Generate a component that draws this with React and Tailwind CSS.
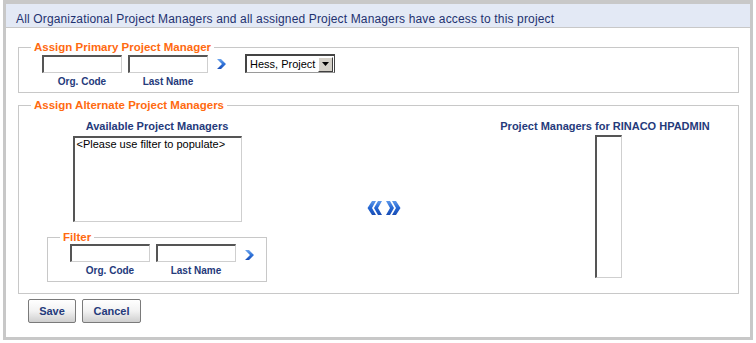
import React from "react";

const navy = "text-[#253a7b]";

function Chevron({ className = "" }) {
  return (
    <svg width="10" height="10" viewBox="0 0 10 10" className={className}>
      <defs>
        <linearGradient id="chev" x1="0" y1="0" x2="0" y2="1">
          <stop offset="0" stopColor="#6ea6ee" />
          <stop offset="0.5" stopColor="#2f72d8" />
          <stop offset="1" stopColor="#1a4fb8" />
        </linearGradient>
      </defs>
      <path d="M0 0 H4 L9 5 L4 10 H0 L5 5 Z" fill="url(#chev)" />
    </svg>
  );
}

function DoubleChevron({ left }) {
  return (
    <svg width="15" height="14" viewBox="0 0 15 14" style={left ? { transform: "scaleX(-1)" } : undefined}>
      <defs>
        <linearGradient id="dchev" x1="0" y1="0" x2="0" y2="1">
          <stop offset="0" stopColor="#5d98ea" />
          <stop offset="0.5" stopColor="#2466d2" />
          <stop offset="1" stopColor="#1a4db5" />
        </linearGradient>
      </defs>
      <path d="M0 0 H4 L8 7 L4 14 H0 L4 7 Z" fill="url(#dchev)" />
      <path d="M6 0 H10 L14.5 7 L10 14 H6 L10 7 Z" fill="url(#dchev)" />
    </svg>
  );
}

function Field({ label, className = "" }) {
  return (
    <div className={"flex flex-col items-center " + className}>
      <div className="w-[80px] h-[18px] bg-white border-t-2 border-l-2 border-r border-b border-t-[#555] border-l-[#555] border-r-[#cfcfcf] border-b-[#cfcfcf]" />
      <div className={"mt-[3px] text-[10px] leading-[12px] font-bold " + navy}>{label}</div>
    </div>
  );
}

function Legend({ children }) {
  return (
    <legend className="ml-[12px] px-[3px] text-[11.5px] leading-[14px] font-bold text-[#ff6a10]">
      {children}
    </legend>
  );
}

export default function App() {
  return (
    <div className="bg-white w-[756px] h-[343px]" style={{ fontFamily: '"Liberation Sans", Arial, sans-serif' }}>
      <div className="ml-[3px] w-[750px] h-[340px] border-[3px] border-t-[4px] border-[#c8c8c8] bg-white">
        <div className="h-[24px] bg-[#e3e9f5] border-b border-[#c8c8c8] pl-[10px] pt-[2px]">
          <span className="text-[12px] leading-[21px] tracking-[0.15px] text-[#1f3270]">
            All Organizational Project Managers and all assigned Project Managers have access to this project
          </span>
        </div>

        <div className="pl-[12px] pr-[11px]">
          <fieldset className="mt-[12px] border border-[#c8c8c8] pb-[4px]">
            <Legend>Assign Primary Project Manager</Legend>
            <div className="flex items-start pt-[1px] pl-[23px]">
              <Field label="Org. Code" />
              <Field label="Last Name" className="ml-[6px]" />
              <Chevron className="ml-[9px] mt-[4px]" />
              <div className="ml-[18px] -mt-[1px] w-[90px] h-[19px] flex items-center justify-between bg-white border-t-2 border-l-2 border-r border-b border-[#444] border-b-[#9a9a9a]">
                <span className="pl-[3px] text-[11px] leading-[13px] text-black">Hess, Project</span>
                <span className="mr-[1px] w-[15px] h-[15px] bg-[#d4d0c8] border border-t-white border-l-white border-r-[#404040] border-b-[#404040] flex items-center justify-center">
                  <svg width="7" height="4" viewBox="0 0 7 4">
                    <path d="M0 0 H7 L3.5 4 Z" fill="#000" />
                  </svg>
                </span>
              </div>
            </div>
          </fieldset>

          <fieldset className="mt-[5px] border border-[#c8c8c8]">
            <Legend>Assign Alternate Project Managers</Legend>
            <div className="flex">
              <div className="w-[276px] flex flex-col items-center pt-[8px] pb-[11px]">
                <div className={"text-[11px] leading-[13px] font-bold " + navy}>Available Project Managers</div>
                <div className="mt-[3px] w-[169px] h-[86px] bg-white border-t-2 border-l-2 border-r border-b border-t-[#555] border-l-[#555] border-r-[#cfcfcf] border-b-[#cfcfcf] pl-[2px]">
                  <div className="text-[11px] leading-[13px] text-black">&lt;Please use filter to populate&gt;</div>
                </div>
                <fieldset className="mt-[8px] w-[220px] border border-[#c8c8c8] pb-[4px]">
                  <Legend>Filter</Legend>
                  <div className="flex items-start pl-[22px]">
                    <Field label="Org. Code" />
                    <Field label="Last Name" className="ml-[6px]" />
                    <Chevron className="ml-[9px] mt-[6px]" />
                  </div>
                </fieldset>
              </div>

              <div className="w-[177px] flex justify-center items-start gap-[4px] pt-[89px]">
                <DoubleChevron left />
                <DoubleChevron />
              </div>

              <div className="flex-1 flex flex-col items-center pt-[8px]">
                <div className={"text-[11px] leading-[13px] font-bold " + navy}>Project Managers for RINACO HPADMIN</div>
                <div className="mt-[2px] ml-[6px] w-[27px] h-[143px] bg-white border-t-2 border-l-2 border-r border-b border-t-[#555] border-l-[#555] border-r-[#cfcfcf] border-b-[#cfcfcf]" />
              </div>
            </div>
          </fieldset>

          <div className="flex gap-[6px] ml-[10px] mt-[5px]">
            <button className={"w-[48px] h-[24px] rounded-[2px] border border-[#7a7a7a] bg-linear-to-b from-white via-[#f2f2f2] to-[#cfcfcf] text-[11px] font-bold " + navy}>
              Save
            </button>
            <button className={"w-[59px] h-[24px] rounded-[2px] border border-[#7a7a7a] bg-linear-to-b from-white via-[#f2f2f2] to-[#cfcfcf] text-[11px] font-bold " + navy}>
              Cancel
            </button>
          </div>
        </div>
      </div>
    </div>
  );
}
